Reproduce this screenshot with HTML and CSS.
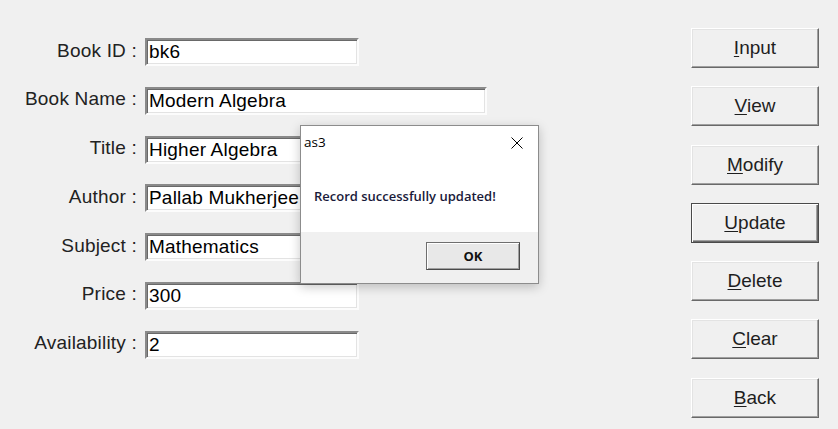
FILE: index.html
```html
<!DOCTYPE html>
<html>
<head>
<meta charset="utf-8">
<link rel="stylesheet" href="styles.css">
</head>
<body>
<div class="window">
  <div class="form">
    <label class="lbl">Book ID :</label><div class="field short">bk6</div>
    <label class="lbl">Book Name :</label><div class="field long">Modern Algebra</div>
    <label class="lbl">Title :</label><div class="field long">Higher Algebra</div>
    <label class="lbl">Author :</label><div class="field long">Pallab Mukherjee</div>
    <label class="lbl">Subject :</label><div class="field long">Mathematics</div>
    <label class="lbl">Price :</label><div class="field short">300</div>
    <label class="lbl">Availability :</label><div class="field short">2</div>
  </div>
  <div class="buttons">
    <button class="btn"><u>I</u>nput</button>
    <button class="btn"><u>V</u>iew</button>
    <button class="btn"><u>M</u>odify</button>
    <button class="btn default"><u>U</u>pdate</button>
    <button class="btn"><u>D</u>elete</button>
    <button class="btn"><u>C</u>lear</button>
    <button class="btn"><u>B</u>ack</button>
  </div>

  <div class="dialog">
    <div class="dlg-title">
      <span class="dlg-name">as3</span>
      <svg class="dlg-close" width="12" height="12" viewBox="0 0 12 12"><path d="M0.5 0.5 L11.5 11.5 M11.5 0.5 L0.5 11.5" stroke="#000" stroke-width="1" fill="none"/></svg>
    </div>
    <div class="dlg-body">Record successfully updated!</div>
    <div class="dlg-foot"><button class="ok">OK</button></div>
  </div>
</div>
</body>
</html>
```
FILE: styles.css
```css
html, body {
  margin: 0;
  padding: 0;
  background: #f0f0f0;
}
.window {
  position: relative;
  width: 838px;
  height: 429px;
  display: flex;
  font-family: "Liberation Sans", Arial, sans-serif;
  font-size: 19px;
  color: #000;
}
.form {
  display: grid;
  grid-template-columns: 137px auto;
  column-gap: 8px;
  row-gap: 20.8px;
  align-content: start;
  align-items: center;
  padding-top: 38px;
  width: 600px;
}
.lbl {
  text-align: right;
  color: #222;
  padding-bottom: 3px;
  letter-spacing: 0.2px;
  white-space: nowrap;
}
.field {
  height: 28px;
  box-sizing: border-box;
  background: #fff;
  border-top: 2px solid #8a8a8a;
  border-left: 2px solid #8a8a8a;
  border-right: 2px solid #fcfcfc;
  border-bottom: 2px solid #fcfcfc;
  box-shadow: inset 1px 1px 0 #696969, inset -1px -1px 0 #e3e3e3;
  padding-left: 2px;
  line-height: 24px;
  white-space: nowrap;
  overflow: hidden;
  letter-spacing: 0.2px;
}
.field.short { width: 214px; }
.field.long { width: 342px; }

.buttons {
  margin-left: 91px;
  padding-top: 28px;
  display: flex;
  flex-direction: column;
  gap: 18.3px;
}
.btn {
  width: 128px;
  height: 40px;
  box-sizing: border-box;
  background: #f0f0f0;
  font-family: "Liberation Sans", Arial, sans-serif;
  font-size: 19px;
  color: #1e1e1e;
  border-top: 1px solid #ffffff;
  border-left: 1px solid #ffffff;
  border-right: 1px solid #696969;
  border-bottom: 1px solid #696969;
  box-shadow: inset -1px -1px 0 #a0a0a0, inset 1px 1px 0 #e3e3e3;
  padding: 0;
}
.btn u { text-underline-offset: 2px; }
.btn.default {
  border: 1px solid #4a4a4a;
  box-shadow: inset 1px 1px 0 #ffffff, inset -1px -1px 0 #696969, inset -2px -2px 0 #a0a0a0;
}

.dialog {
  position: absolute;
  left: 300px;
  top: 125px;
  width: 239px;
  height: 159px;
  box-sizing: border-box;
  border: 1px solid #8c8c8c;
  background: #fff;
  box-shadow: 0 3px 10px rgba(0,0,0,0.22);
  display: flex;
  flex-direction: column;
  font-family: "Open Sans", "Segoe UI", sans-serif;
}
.dlg-title {
  height: 34px;
  display: flex;
  align-items: center;
  justify-content: space-between;
  padding: 0 15px 0 3px;
}
.dlg-name {
  font-size: 13.5px;
  color: #000;
  padding-bottom: 2px;
}
.dlg-close { margin-bottom: 1px; }
.dlg-body {
  height: 72px;
  padding-left: 13px;
  padding-top: 27px;
  box-sizing: border-box;
  font-size: 13px;
  font-weight: 600;
  color: #1a1a3a;
  white-space: nowrap;
}
.dlg-foot {
  flex: 1;
  background: #f0f0f0;
  display: flex;
  justify-content: flex-end;
  align-items: flex-start;
  padding: 10px 18px 0 0;
}
.ok {
  width: 94px;
  height: 28px;
  box-sizing: border-box;
  background: #e8e8e8;
  border: 1px solid #6e6e6e;
  border-right-color: #4a4a4a;
  border-bottom-color: #4a4a4a;
  box-shadow: inset 1px 1px 0 #fff, inset -1px -1px 0 #a0a0a0;
  font-family: "Open Sans", sans-serif;
  font-size: 13px;
  font-weight: 700;
  color: #111;
  padding: 0;
}
```
